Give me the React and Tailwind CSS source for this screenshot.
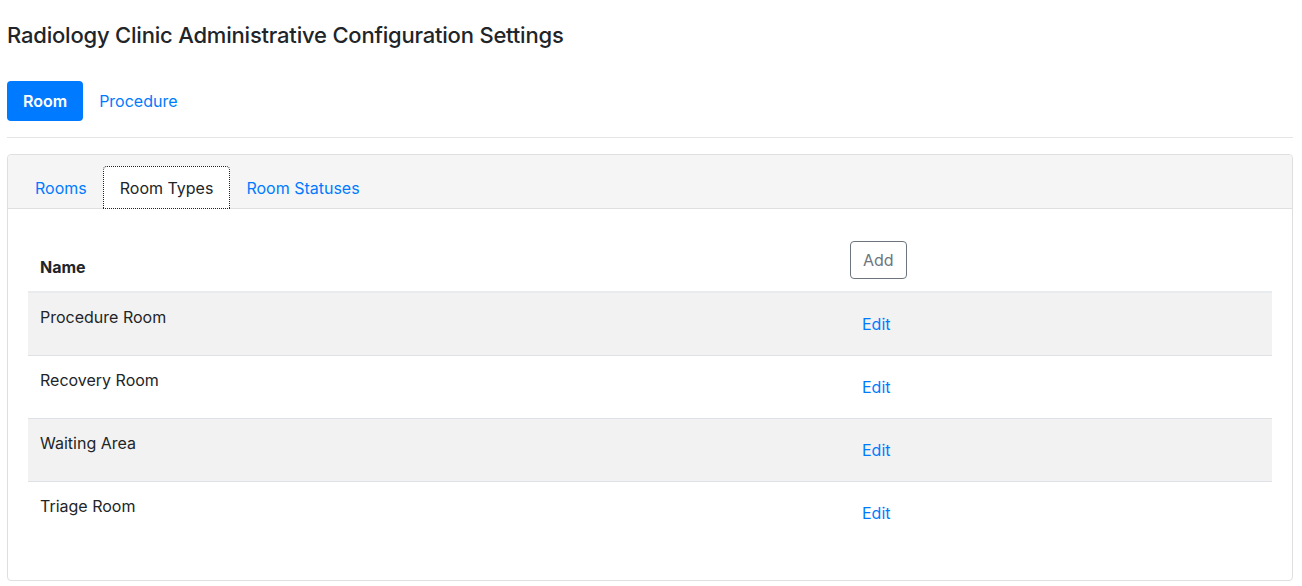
import { useState } from 'react'

const roomTypes = ['Procedure Room', 'Recovery Room', 'Waiting Area', 'Triage Room']

function App() {
  const [tab, setTab] = useState('Room Types')

  return (
    <div className="min-h-screen bg-white text-[#212529] font-['Inter','Liberation_Sans',sans-serif] text-base">
      <div className="pl-[7px] pr-[9px]">
        {/* Title */}
        <h4 className="pt-[21px] text-[22px] leading-[28px] font-medium tracking-[-0.2px]">
          Radiology Clinic Administrative Configuration Settings
        </h4>

        {/* Top pills */}
        <div className="mt-[32px] flex items-center">
          <button className="h-10 px-4 rounded bg-[#007bff] text-white font-semibold leading-6">Room</button>
          <button className="h-10 px-4 text-[#007bff] leading-6">Procedure</button>
        </div>

        <hr className="mt-4 border-0 border-t border-[#e5e5e5]" />

        {/* Card */}
        <div className="mt-4 border border-[#dfdfdf] rounded">
          <div className="bg-[#f5f5f5] border-b border-[#dfdfdf] px-[11px] pt-[11px] rounded-t">
            <div className="flex -mb-px">
              {['Rooms', 'Room Types', 'Room Statuses'].map(t => (
                <button
                  key={t}
                  onClick={() => setTab(t)}
                  className={
                    t === tab
                      ? 'h-[43px] px-[17px] bg-white text-[#212529] leading-6 outline-1 outline-dotted outline-[#222] -outline-offset-1 rounded-t'
                      : 'h-[43px] px-4 text-[#007bff] leading-6'
                  }
                >
                  {t}
                </button>
              ))}
            </div>
          </div>

          <div className="px-5 pt-5 pb-9">
            <table className="w-full border-collapse">
              <thead>
                <tr className="border-b-2 border-[#e9ecef]">
                  <th className="w-[810px] px-3 pt-3 pb-3 text-left font-bold align-bottom leading-6">Name</th>
                  <th className="px-3 pt-3 pb-3 text-left align-bottom font-normal">
                    <button className="h-[38px] px-3 border border-[#6c757d] rounded text-[#6c757d] leading-6">Add</button>
                  </th>
                </tr>
              </thead>
              <tbody>
                {roomTypes.map((r, i) => (
                  <tr key={r} className={(i % 2 === 0 ? 'bg-[#f2f2f2]' : 'bg-white') + ' border-t border-[#dee2e6] first:border-t-0'}>
                    <td className="px-3 py-3 align-top leading-6">{r}</td>
                    <td className="px-3 py-3">
                      <button className="h-[38px] px-3 text-[#007bff] leading-6">Edit</button>
                    </td>
                  </tr>
                ))}
              </tbody>
            </table>
          </div>
        </div>
      </div>
    </div>
  )
}

export default App
